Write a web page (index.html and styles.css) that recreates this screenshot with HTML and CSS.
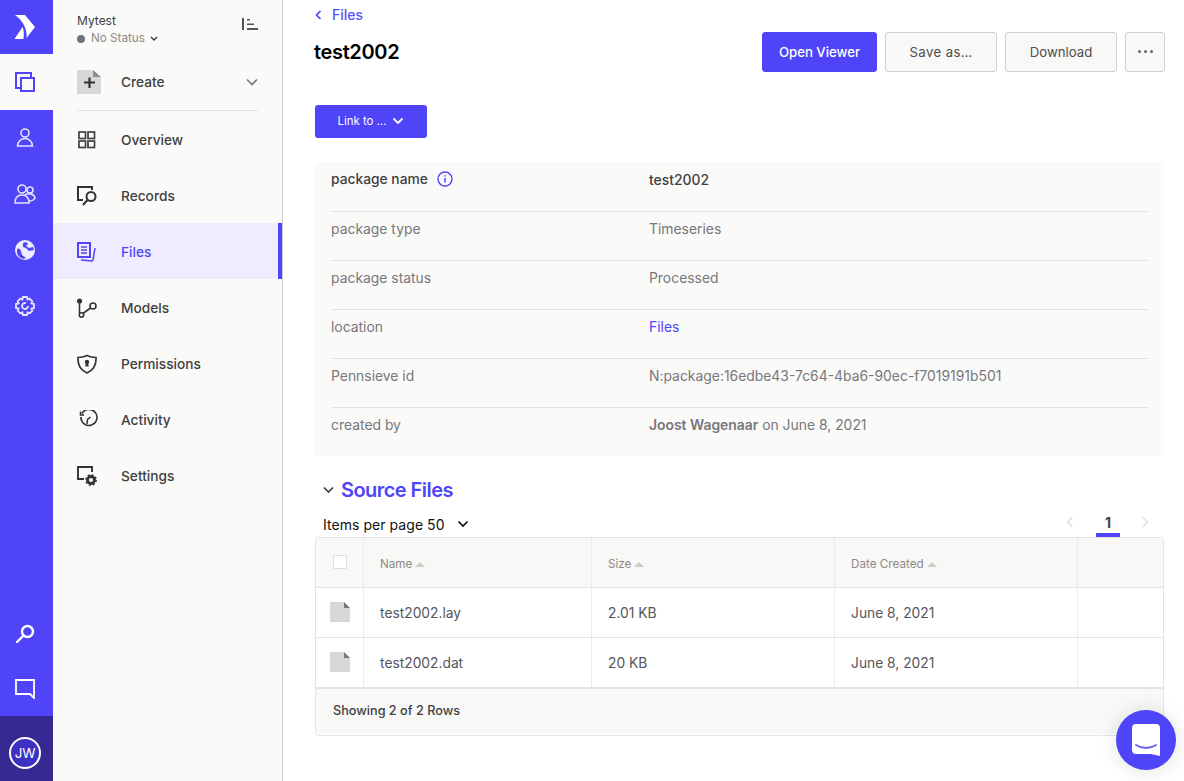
FILE: index.html
```html
<!DOCTYPE html>
<html lang="en">
<head>
<meta charset="utf-8">
<title>test2002</title>
<link rel="stylesheet" href="styles.css">
</head>
<body>
<div class="app">
  <nav class="rail">
    <div class="rail-logo"><svg width="22" height="24" viewBox="0 0 22 24" fill="#fff"><path d="M1 0h10l10 12-8.500 11C13.500 16 10 6 1 0z"/><path d="M.5 24 8.500 12c1.500 3 1.500 8 1 12z"/></svg></div>
    <a class="rail-item rail-active"><svg width="22" height="22" viewBox="0 0 22 22" fill="none" stroke="#4f44f7" stroke-width="2"><path d="M17 7V2H2v15h5"/><rect x="7" y="7" width="13" height="13"/></svg></a>
    <a class="rail-item"><svg width="20" height="22" viewBox="0 0 20 22" fill="none" stroke="#fff" stroke-width="1.600" opacity=".85"><circle cx="10" cy="6" r="4"/><path d="M2.500 19a7.500 7.500 0 0 1 15 0zM2 19h16"/></svg></a>
    <a class="rail-item"><svg width="22" height="22" viewBox="0 0 22 22" fill="none" stroke="#fff" stroke-width="1.600" opacity=".85"><circle cx="8" cy="6" r="4"/><circle cx="16" cy="7" r="3"/><path d="M1 20c0-6 3-8 7-8s7 2 7 8zM11 12c2-2 9-2 10 3-1 2-3 3-6 3"/></svg></a>
    <a class="rail-item"><svg width="20" height="20" viewBox="0 0 20 20"><circle cx="10" cy="10" r="10" fill="#fff" opacity=".9"/><path d="M2 9c2-1 3 0 4 2l1 4 4 3c-4 2-8-1-9-5zM8 3c2-1 4-1 5 1l-2 2 3 2 4-1 1 3-5 1-3-3-3-1z" fill="#4f44f7"/></svg></a>
    <a class="rail-item"><svg width="20" height="20" viewBox="0 0 20 20" fill="none" stroke="#fff" stroke-width="1.800" opacity=".85"><path d="M8 1h4l.6 2.500 2-.9 2.800 2.800-1 2 2.600.6v4l-2.600.6 1 2-2.800 2.800-2-1L12 19H8l-.6-2.600-2 1-2.800-2.800 1-2L1 12V8l2.600-.6-1-2 2.800-2.800 2 .9z"/><path d="M13 10a3 3 0 1 1-2-2.800"/></svg></a>
    <div class="rail-spacer"></div>
    <a class="rail-item"><svg width="20" height="20" viewBox="0 0 20 20" fill="none" stroke="#fff" stroke-width="2.400"><circle cx="12.500" cy="7.500" r="5.500"/><path d="M8.500 11.500 2 18" stroke-linecap="round"/></svg></a>
    <a class="rail-item rail-chat"><svg width="20" height="20" viewBox="0 0 20 20" fill="none" stroke="#fff" stroke-width="1.800"><path d="M1 1h18v18l-4-4H1z"/></svg></a>
    <div class="rail-user"><span class="avatar">JW</span></div>
  </nav>

  <aside class="side">
    <header class="side-head">
      <div>
        <div class="org">Mytest</div>
        <div class="status"><span class="dot"></span>No Status<svg width="8" height="6" viewBox="0 0 8 6" fill="none" stroke="#333" stroke-width="1.300"><path d="M1 1l3 3 3-3"/></svg></div>
      </div>
      <svg class="collapse" width="16" height="12" viewBox="0 0 16 12" fill="#555"><rect width="2" height="12" x="0"/><rect x="5" y="1" width="3" height="1.500"/><rect x="5" y="5.500" width="7" height="1.500"/><rect x="5" y="10" width="11" height="2"/></svg>
    </header>
    <div class="create">
      <svg class="side-ico" width="24" height="24" viewBox="0 0 24 24"><path d="M0 0h16l8 8v16H0z" fill="#d8d8d8"/><path d="M16 0l8 7h-8z" fill="#8e8e93"/><path d="M7 12.500h11M12.500 7.500v10.500" stroke="#333" stroke-width="2.200"/></svg>
      <span class="side-label">Create</span>
      <svg class="create-chev" width="12" height="8" viewBox="0 0 12 8" fill="none" stroke="#77777c" stroke-width="1.600"><path d="M1 1.500l5 5 5-5"/></svg>
    </div>
    <ul class="side-list">
      <li class="side-item"><svg class="side-ico" width="20" height="20" viewBox="0 0 20 20" fill="none" stroke="#404040" stroke-width="1.700"><rect x="2" y="2" width="6.500" height="6.500"/><rect x="11" y="2" width="6.500" height="6.500"/><rect x="2" y="11" width="6.500" height="6.500"/><rect x="11" y="11" width="6.500" height="6.500"/></svg><span class="side-label">Overview</span></li>
      <li class="side-item"><svg class="side-ico" width="20" height="20" viewBox="0 0 20 20" fill="none" stroke="#333" stroke-width="2"><path d="M6 14H1V1h14v3"/><circle cx="14" cy="10.500" r="4.500"/><path d="M10.500 14 6 19"/></svg><span class="side-label">Records</span></li>
      <li class="side-item side-active"><svg class="side-ico" width="20" height="20" viewBox="0 0 20 20" fill="none" stroke="#4f44f7" stroke-width="2"><path d="M1 1h12v14H1z"/><path d="M4 5h6M4 8h6M4 11h6" stroke-width="1.600"/><path d="M4 18h1l10 1 1-1 2-12" stroke-width="1.500"/></svg><span class="side-label">Files</span></li>
      <li class="side-item"><svg class="side-ico" width="20" height="20" viewBox="0 0 20 20" fill="none" stroke="#333" stroke-width="1.600"><circle cx="2.500" cy="3" r="1.800" fill="#333"/><path d="M2.500 4v11"/><circle cx="4.500" cy="17" r="2.200"/><circle cx="16" cy="8" r="3"/><path d="M6 15.500 13.500 10"/></svg><span class="side-label">Models</span></li>
      <li class="side-item"><svg class="side-ico" width="20" height="20" viewBox="0 0 20 20"><path d="M10 1.500c3 1.500 6 2 9 2 .5 8-2 12.500-9 15.500C3 16 .5 11.500 1 3.500c3 0 6-.5 9-2z" fill="none" stroke="#333" stroke-width="1.700"/><circle cx="10" cy="8" r="2.200" fill="#333"/><path d="M9 9h2l.8 3.500H8.200z" fill="#333"/></svg><span class="side-label">Permissions</span></li>
      <li class="side-item"><svg class="side-ico" width="20" height="20" viewBox="0 0 20 20" fill="none" stroke="#333" stroke-width="1.600" transform="translate(1 0)"><path d="M4 3.500A8 8 0 1 1 3 7"/><path d="M2.500 1.500v3.500h3.500" stroke-width="1.500"/><path d="M12.500 7 9.500 9.500 9 14" stroke-width="1.500"/></svg><span class="side-label">Activity</span></li>
      <li class="side-item"><svg class="side-ico" width="20" height="20" viewBox="0 0 20 20"><path d="M7 13H1V1h14v5" fill="none" stroke="#333" stroke-width="1.900"/><circle cx="14" cy="14" r="3.500" fill="none" stroke="#333" stroke-width="2.800"/><circle cx="14" cy="14" r="5.200" fill="none" stroke="#333" stroke-width="1.400" stroke-dasharray="2 2.080"/></svg><span class="side-label">Settings</span></li>
    </ul>
  </aside>

  <main class="main">
    <a class="crumb"><svg width="7" height="10" viewBox="0 0 7 10" fill="none" stroke="#4f44f7" stroke-width="1.700"><path d="M5.500 1 1.500 5l4 4"/></svg>Files</a>
    <div class="title-row">
      <h1 class="title">test2002</h1>
      <div class="actions">
        <button class="btn btn-primary btn-wide">Open Viewer</button>
        <button class="btn btn-save btn-saveas">Save as…</button>
        <button class="btn btn-save">Download</button>
        <button class="btn btn-more"><span class="pip"></span><span class="pip"></span><span class="pip"></span></button>
      </div>
    </div>
    <button class="link-btn">Link to ... <svg width="12" height="8" viewBox="0 0 12 8" fill="none" stroke="#fff" stroke-width="1.800"><path d="M1.500 1.500 6 6l4.500-4.500"/></svg></button>

    <section class="info">
      <div class="info-row info-first"><div class="info-key">package name<svg width="16" height="16" viewBox="0 0 16 16" fill="none" stroke="#4f44f7" stroke-width="1.400"><circle cx="8" cy="8" r="7"/><path d="M8 7v4.500M8 4.300v1.200" stroke-width="1.500"/></svg></div><div class="info-val">test2002</div></div>
      <div class="info-row"><div class="info-key">package type</div><div class="info-val">Timeseries</div></div>
      <div class="info-row"><div class="info-key">package status</div><div class="info-val">Processed</div></div>
      <div class="info-row"><div class="info-key">location</div><div class="info-val"><a class="info-link">Files</a></div></div>
      <div class="info-row"><div class="info-key">Pennsieve id</div><div class="info-val">N:package:16edbe43-7c64-4ba6-90ec-f7019191b501</div></div>
      <div class="info-row"><div class="info-key">created by</div><div class="info-val"><strong>Joost Wagenaar</strong> on June 8, 2021</div></div>
    </section>

    <h2 class="section"><svg width="11" height="8" viewBox="0 0 11 8" fill="none" stroke="#404040" stroke-width="1.700"><path d="M1 1.500l4.500 4.500L10 1.500"/></svg>Source Files</h2>
    <div class="tools">
      <div class="per-page">Items per page 50<svg width="12" height="8" viewBox="0 0 12 8" fill="none" stroke="#111" stroke-width="1.700"><path d="M1.500 1.500 6 6l4.500-4.500"/></svg></div>
      <div class="pager">
        <svg width="8" height="12" viewBox="0 0 8 12" fill="none" stroke="#ddd" stroke-width="1.300"><path d="M6.500 1 1.500 6l5 5"/></svg>
        <span class="page-num">1</span>
        <svg width="8" height="12" viewBox="0 0 8 12" fill="none" stroke="#ddd" stroke-width="1.300"><path d="M1.500 1l5 5-5 5"/></svg>
      </div>
    </div>

    <div class="table">
      <div class="tr th">
        <div class="c c-check"><span class="check"></span></div>
        <div class="c c-name">Name<span class="sort"></span></div>
        <div class="c c-size">Size<span class="sort"></span></div>
        <div class="c c-date">Date Created<span class="sort"></span></div>
        <div class="c c-end"></div>
      </div>
      <div class="tr">
        <div class="c c-check"><svg width="20" height="20" viewBox="0 0 20 20"><path d="M0 0h14l6 6v14H0z" fill="#d8d8d8"/><path d="M14 0l6 6h-6z" fill="#77777c"/></svg></div>
        <div class="c c-name">test2002.lay</div>
        <div class="c c-size">2.01 KB</div>
        <div class="c c-date">June 8, 2021</div>
        <div class="c c-end"></div>
      </div>
      <div class="tr">
        <div class="c c-check"><svg width="20" height="20" viewBox="0 0 20 20"><path d="M0 0h14l6 6v14H0z" fill="#d8d8d8"/><path d="M14 0l6 6h-6z" fill="#77777c"/></svg></div>
        <div class="c c-name">test2002.dat</div>
        <div class="c c-size">20 KB</div>
        <div class="c c-date">June 8, 2021</div>
        <div class="c c-end"></div>
      </div>
      <div class="tfoot">Showing 2 of 2 Rows</div>
    </div>
  </main>
</div>
<button class="chat-fab"><svg width="28" height="32" viewBox="0 0 28 32"><path d="M4 0h20a4 4 0 0 1 4 4v28l-9-2H4a4 4 0 0 1-4-4V4a4 4 0 0 1 4-4z" fill="#fff"/><path d="M4 21c6 4 14 4 20 0" fill="none" stroke="#6a60f5" stroke-width="1.800" stroke-linecap="round"/></svg></button>
</body>
</html>
```

FILE: styles.css
```css
* { box-sizing: border-box; }
html, body { margin: 0; height: 100%; overflow: hidden; }
body { font-family: Inter, "Liberation Sans", sans-serif; font-size: 14px; color: #404040; background: #fff; }
.app { display: flex; height: 781px; }
button { font-family: inherit; cursor: pointer; }

.rail { width: 53px; flex: none; background: #4f44f7; display: flex; flex-direction: column; }
.rail-logo { height: 54px; padding-right: 3px; display: flex; align-items: center; justify-content: center; }
.rail-item { height: 56px; padding-right: 3px; display: flex; align-items: center; justify-content: center; flex: none; }
.rail-active { background: #fafaf9; }
.rail-spacer { flex: 1; }
.rail-chat { height: 54px; }
.rail-user { height: 65px; padding: 8px 3px 0 0; background: #352a91; display: flex; align-items: center; justify-content: center; }
.avatar { width: 32px; height: 32px; border-radius: 50%; border: 2px solid #fff; color: #fff; background: #3d31c4; font-size: 13.500px; display: flex; align-items: center; justify-content: center; letter-spacing: -.3px; }

.side { width: 230px; flex: none; background: #fafaf9; border-right: 1px solid #cfcfcf; }
.side-head { height: 53px; padding: 13px 24px 0; display: flex; justify-content: space-between; align-items: flex-start; }
.org { font-size: 12px; line-height: 15px; color: #404040; }
.status { margin-top: 3px; display: flex; align-items: center; font-size: 11.700px; line-height: 15px; color: #8e8a86; }
.status svg { margin-left: 5px; margin-top: 1px; }
.dot { width: 8px; height: 8px; border-radius: 50%; background: #71747c; margin-right: 6px; }
.collapse { margin-top: 5px; }
.create { height: 58px; margin: 0 24px; padding-top: 1px; display: flex; align-items: center; border-bottom: 1px solid #e4e4e4; }
.side-ico { flex: none; }
.create .side-label { margin-left: 20px; }
.create-chev { margin-left: auto; }
.side-list { list-style: none; margin: 0; padding: 0; }
.side-item { height: 56px; padding: 1px 0 0 24px; display: flex; align-items: center; }
.side-label { margin-left: 24px; font-size: 13.700px; font-weight: 500; color: #404040; }
.side-active { background: #eeecfe; border-right: 4px solid #4f44f7; }
.side-active .side-label { color: #4f44f7; }

.main { flex: 1; min-width: 0; padding: 0 19px 0 32px; }
.crumb { display: flex; align-items: center; height: 30px; padding-bottom: 1px; font-size: 14px; font-weight: 500; color: #5a50f7; gap: 10px; }
.title-row { display: flex; justify-content: space-between; align-items: center; height: 40px; margin-top: 2px; margin-left: -1px; }
.title { margin: 0; font-size: 20px; font-weight: 600; color: #000; line-height: 40px; letter-spacing: -.35px; }
.actions { display: flex; gap: 8px; }
.btn { height: 40px; border-radius: 3px; font-size: 13.200px; border: 1px solid #d3d3d6; background: #f8f8f7; color: #4d4d4d; padding: 0 0 1px; }
.btn-save { width: 112px; }
.btn-saveas { letter-spacing: .4px; }
.btn-primary { background: #4f44f7; border-color: #4f44f7; color: #fff; font-weight: 500; }
.btn-wide { width: 115px; }
.btn-more { width: 40px; display: flex; align-items: center; justify-content: center; gap: 3px; }
.pip { width: 3px; height: 3px; border-radius: 50%; background: #66666b; }
.link-btn { display: flex; align-items: center; justify-content: center; gap: 6px; width: 112px; height: 33px; margin-top: 33px; background: #4f44f7; color: #fff; border: 0; border-radius: 3px; font-size: 11.400px; padding: 0 0 2px; }

.info { margin-top: 24px; width: 849px; height: 294px; background: #fafaf9; padding: 0 16px; }
.info-row { display: flex; height: 49px; border-top: 1px solid #e4e4e4; padding-top: 7px; font-size: 13.900px; line-height: 20px; color: #77777c; }
.info-first { border-top: 0; padding-top: 7px; }
.info-key { width: 318px; display: flex; align-items: center; gap: 9px; height: 20px; }
.info-first .info-key { color: #404040; font-weight: 500; font-size: 13.800px; }
.info-first .info-val { color: #404040; font-weight: 500; padding-top: 1px; }
.info-link { color: #4f44f7; }
.info-val strong { font-weight: 600; }

.section { display: flex; align-items: center; gap: 7px; margin: 22px 0 0 8px; height: 24px; font-size: 20px; font-weight: 600; color: #4f44f7; letter-spacing: -.55px; }
.tools { display: flex; justify-content: space-between; align-items: flex-start; height: 36px; width: 849px; }
.per-page { margin: 12px 0 0 8px; display: flex; align-items: center; gap: 12px; height: 20px; font-size: 14px; color: #111; letter-spacing: .05px; }
.pager { display: flex; align-items: flex-start; margin-right: 15px; }
.pager svg { margin-top: 14px; }
.page-num { width: 24px; height: 23px; margin: 12px 21px 0 22px; text-align: center; font-size: 14px; font-weight: 700; line-height: 18px; border-bottom: 4px solid #4f44f7; color: #404040; }

.table { width: 849px; height: 199px; border: 1px solid #e4e4e4; border-radius: 3px; margin-top: -1px; }
.tr { display: flex; height: 50px; border-bottom: 1px solid #e4e4e4; background: #fff; }
.th { height: 50px; background: #f8f8f7; font-size: 11.700px; color: #8e8a86; }
.th .c { padding-top: 3px; }
.c { display: flex; align-items: center; padding-left: 16px; border-right: 1px solid #ececf0; }
.c-check { width: 48px; padding-left: 14px; }
.c-name { width: 228px; padding-left: 16px; }
.c-size { width: 243px; }
.c-date { width: 243px; }
.c-end { flex: 1; border-right: 0; }
.tr:not(.th) .c { font-size: 13.800px; color: #55555a; padding-top: 1px; }
.th .c-check { padding-top: 0; }
.tr:not(.th) .c-check { padding-top: 0; padding-bottom: 1px; }
.check { width: 14px; height: 14px; margin-left: 3px; margin-top: -1px; background: #fff; border: 1px solid #dcdcde; border-radius: 2px; }
.sort { margin-left: 3px; border: 5px solid transparent; border-top: 0; border-bottom: 5px solid #cfccc8; }
.tfoot { height: 47px; background: #f8f8f7; border-top: 2px solid #e4e4e4; margin-top: -1px; padding: 0 0 3px 17px; display: flex; align-items: center; font-size: 12.700px; font-weight: 500; color: #404040; }

.chat-fab { position: fixed; right: 8px; bottom: 11px; width: 60px; height: 60px; border-radius: 50%; border: 0; padding: 0 0 1px; background: #4f44f7; display: flex; align-items: center; justify-content: center; box-shadow: 0 1px 20px rgba(0,0,0,.12); }
```
